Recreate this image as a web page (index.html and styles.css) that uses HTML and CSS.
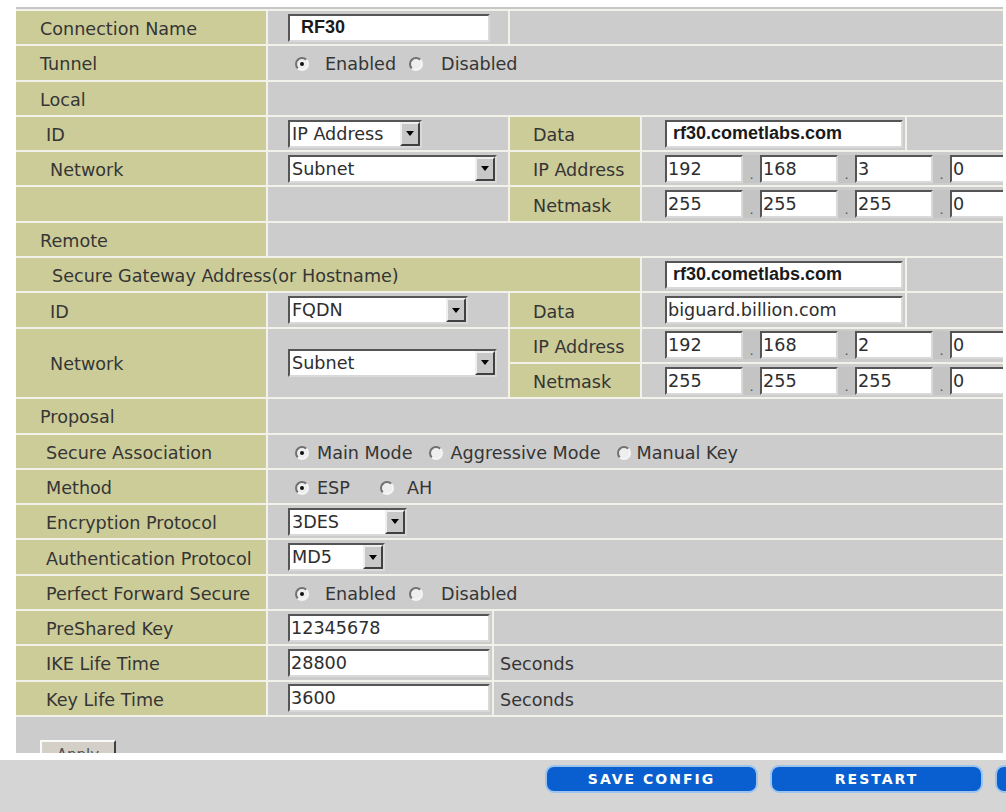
FILE: index.html
```html
<!DOCTYPE html>
<html>
<head>
<meta charset="utf-8">
<title>IPSec Connection</title>
<link rel="stylesheet" href="styles.css">
</head>
<body>
<div class="page">
  <div class="panel">
    <div class="form">
      <!-- 1 -->
      <div class="lbl">Connection Name</div>
      <div class="cell"><input class="txt bold w202 pb1" value="RF30"></div>
      <div class="cell s3"></div>
      <!-- 2 -->
      <div class="lbl">Tunnel</div>
      <div class="cell s4 radios">
        <span class="opt"><span class="rb on wide"></span><span class="ol wide">Enabled</span></span>
        <span class="opt"><span class="rb wide2"></span><span>Disabled</span></span>
      </div>
      <!-- 3 -->
      <div class="lbl">Local</div>
      <div class="cell s4"></div>
      <!-- 4 -->
      <div class="lbl sub">ID</div>
      <div class="cell"><div class="sel w134"><span class="v">IP Address</span><span class="arr"></span></div></div>
      <div class="olive">Data</div>
      <div class="cell d"><input class="txt bold w238 pb2" value="rf30.cometlabs.com"></div>
      <div class="cell"></div>
      <!-- 5 -->
      <div class="lbl sub2">Network</div>
      <div class="cell"><div class="sel w209"><span class="v">Subnet</span><span class="arr"></span></div></div>
      <div class="olive">IP Address</div>
      <div class="cell d s2 clip">
        <div class="ip"><input class="txt ipf" value="192"><span class="dot">.</span><input class="txt ipf" value="168"><span class="dot">.</span><input class="txt ipf" value="3"><span class="dot">.</span><input class="txt ipf" value="0"></div>
      </div>
      <!-- 6 -->
      <div class="lbl"></div>
      <div class="cell"></div>
      <div class="olive">Netmask</div>
      <div class="cell d s2 clip">
        <div class="ip"><input class="txt ipf" value="255"><span class="dot">.</span><input class="txt ipf" value="255"><span class="dot">.</span><input class="txt ipf" value="255"><span class="dot">.</span><input class="txt ipf" value="0"></div>
      </div>
      <!-- 7 -->
      <div class="lbl">Remote</div>
      <div class="cell s4"></div>
      <!-- 8 -->
      <div class="lbl sub3 s3">Secure Gateway Address(or Hostname)</div>
      <div class="cell d"><input class="txt bold w238 pb2" value="rf30.cometlabs.com"></div>
      <div class="cell"></div>
      <!-- 9 -->
      <div class="lbl sub2">ID</div>
      <div class="cell"><div class="sel w180"><span class="v">FQDN</span><span class="arr"></span></div></div>
      <div class="olive">Data</div>
      <div class="cell d"><input class="txt w238" value="biguard.billion.com"></div>
      <div class="cell"></div>
      <!-- 10 / 11 -->
      <div class="lbl sub2 r2">Network</div>
      <div class="cell r2"><div class="sel w209"><span class="v">Subnet</span><span class="arr"></span></div></div>
      <div class="olive">IP Address</div>
      <div class="cell d s2 clip">
        <div class="ip"><input class="txt ipf" value="192"><span class="dot">.</span><input class="txt ipf" value="168"><span class="dot">.</span><input class="txt ipf" value="2"><span class="dot">.</span><input class="txt ipf" value="0"></div>
      </div>
      <div class="olive">Netmask</div>
      <div class="cell d s2 clip">
        <div class="ip"><input class="txt ipf" value="255"><span class="dot">.</span><input class="txt ipf" value="255"><span class="dot">.</span><input class="txt ipf" value="255"><span class="dot">.</span><input class="txt ipf" value="0"></div>
      </div>
      <!-- 12 -->
      <div class="lbl">Proposal</div>
      <div class="cell s4"></div>
      <!-- 13 -->
      <div class="lbl sub">Secure Association</div>
      <div class="cell s4 radios">
        <span class="opt"><span class="rb on"></span><span class="ol">Main Mode</span></span>
        <span class="opt"><span class="rb"></span><span class="ol">Aggressive Mode</span></span>
        <span class="opt"><span class="rb tight"></span><span>Manual Key</span></span>
      </div>
      <!-- 14 -->
      <div class="lbl sub">Method</div>
      <div class="cell s4 radios">
        <span class="opt"><span class="rb on"></span><span class="ol far">ESP</span></span>
        <span class="opt"><span class="rb mid"></span><span>AH</span></span>
      </div>
      <!-- 15 -->
      <div class="lbl sub">Encryption Protocol</div>
      <div class="cell s4"><div class="sel w119"><span class="v">3DES</span><span class="arr"></span></div></div>
      <!-- 16 -->
      <div class="lbl sub">Authentication Protocol</div>
      <div class="cell s4"><div class="sel w97"><span class="v">MD5</span><span class="arr"></span></div></div>
      <!-- 17 -->
      <div class="lbl sub">Perfect Forward Secure</div>
      <div class="cell s4 radios">
        <span class="opt"><span class="rb on wide"></span><span class="ol wide">Enabled</span></span>
        <span class="opt"><span class="rb wide2"></span><span>Disabled</span></span>
      </div>
      <!-- 18 -->
      <div class="lbl sub">PreShared Key</div>
      <div class="split s4">
        <div class="cell first"><input class="txt w202" value="12345678"></div>
        <div class="cell rest"></div>
      </div>
      <!-- 19 -->
      <div class="lbl sub">IKE Life Time</div>
      <div class="split s4">
        <div class="cell first"><input class="txt w202" value="28800"></div>
        <div class="cell rest">Seconds</div>
      </div>
      <!-- 20 -->
      <div class="lbl sub">Key Life Time</div>
      <div class="split s4">
        <div class="cell first"><input class="txt w202" value="3600"></div>
        <div class="cell rest">Seconds</div>
      </div>
    </div>
    <div class="applyrow"><button class="apply" type="button">Apply</button></div>
  </div>
  <div class="bar">
    <button class="btn" type="button">SAVE CONFIG</button>
    <button class="btn" type="button">RESTART</button>
    <button class="btn" type="button" aria-label="Logout"></button>
  </div>
</div>
</body>
</html>
```

FILE: styles.css
```css
* { box-sizing: border-box; }
html, body { margin: 0; padding: 0; background: #fff; }
body {
  width: 1006px;
  height: 812px;
  overflow: hidden;
  font-family: "DejaVu Sans", Verdana, sans-serif;
  font-size: 17.6px;
  color: #353535;
}
.page { display: flex; flex-direction: column; }

.panel {
  margin: 7px 0 0 16px;
  width: 987px;
  border-top: 2px solid #c6c6c6;
  padding-top: 2px;
  background: #f2f2ea;
}
.form {
  display: grid;
  grid-template-columns: 250px 240px 130px 263px 96px;
  grid-auto-rows: 33.3px;
  gap: 2px;
}
.lbl {
  background: #cccc99;
  display: flex;
  align-items: center;
  padding: 3px 0 0 24px;
  white-space: nowrap;
}
.lbl.sub { padding-left: 30px; }
.lbl.sub2 { padding-left: 34px; }
.lbl.sub3 { padding-left: 36px; }
.olive {
  background: #cccc99;
  display: flex;
  align-items: center;
  padding: 3px 0 0 23px;
  white-space: nowrap;
}
.cell {
  background: #cccccc;
  display: flex;
  align-items: center;
  padding-left: 20px;
  white-space: nowrap;
}
.cell.d { padding-left: 23px; }
.clip { overflow: hidden; }
.s2 { grid-column: span 2; }
.s3 { grid-column: span 3; }
.s4 { grid-column: span 4; }
.r2 { grid-row: span 2; }

.split { display: flex; gap: 2px; }
.split .first { width: 224px; flex: none; }
.split .rest { flex: 1; padding: 3px 0 0 6px; }

/* text inputs */
.txt {
  height: 28px;
  border: 2px solid;
  border-color: #555 #d9d9d9 #d9d9d9 #555;
  background: #fff;
  font-family: "DejaVu Sans", Verdana, sans-serif;
  font-size: 17.6px;
  color: #2e2e2e;
  padding: 0 1px;
  margin: 0;
  outline: none;
}
.txt.bold {
  font-family: "Liberation Sans", Arial, sans-serif;
  font-weight: bold;
  font-size: 18px;
  color: #1a1a1a;
}
.pb1 { padding-left: 11px; }
.pb2 { padding-left: 6px; }
.w202 { width: 202px; }
.w238 { width: 238px; }

.ip { display: flex; align-items: stretch; flex: none; }
.ipf { width: 78px; flex: none; }
.dot {
  width: 17px;
  flex: none;
  display: flex;
  align-items: flex-end;
  justify-content: center;
  font-size: 13px;
  line-height: 1;
  padding-bottom: 2px;
  color: #555;
  background: #c4c4c4;
}

/* fake select */
.sel {
  display: flex;
  height: 28px;
  border: 2px solid;
  border-color: #555 #d9d9d9 #d9d9d9 #555;
  background: #fff;
  flex: none;
}
.sel .v {
  flex: 1;
  display: flex;
  align-items: center;
  padding-left: 2px;
  color: #2e2e2e;
}
.sel .arr {
  width: 20px;
  background: #c8c8c8;
  border: 2px solid;
  border-color: #efefef #404040 #404040 #efefef;
  display: flex;
  align-items: center;
  justify-content: center;
}
.sel .arr::after {
  content: "";
  width: 0;
  height: 0;
  border-left: 4px solid transparent;
  border-right: 4px solid transparent;
  border-top: 5px solid #000;
}
.w134 { width: 134px; }
.w209 { width: 209px; }
.w180 { width: 180px; }
.w119 { width: 119px; }
.w97 { width: 97px; }

/* radios */
.radios { padding: 3px 0 0 27px; }
.opt { display: inline-flex; align-items: center; }
.rb {
  width: 14px;
  height: 14px;
  border-radius: 50%;
  border: 2px solid;
  border-color: #707070 #f4f4f4 #f4f4f4 #707070;
  background: #eeeeee;
  margin-right: 8px;
  display: inline-flex;
  align-items: center;
  justify-content: center;
  flex: none;
}
.rb.on::after {
  content: "";
  width: 4px;
  height: 4px;
  border-radius: 50%;
  background: #111;
}
.rb.wide { margin-right: 16px; }
.rb.wide2 { margin-right: 18px; }
.rb.mid { margin-right: 13px; }
.rb.tight { margin-right: 6px; }
.ol { margin-right: 16px; }
.ol.wide { margin-right: 13px; }
.ol.far { margin-right: 30px; }

/* apply row */
.applyrow {
  margin-top: 2px;
  height: 36px;
  background: #cccccc;
  overflow: hidden;
  padding: 23px 0 0 24px;
}
.apply {
  width: 76px;
  height: 30px;
  border: 2px solid;
  border-color: #fafafa #404040 #404040 #fafafa;
  background: #d4d0c8;
  font-family: "DejaVu Sans", Verdana, sans-serif;
  font-size: 15px;
  color: #555;
  padding: 0;
}

/* bottom bar */
.bar {
  margin-top: 7px;
  height: 52px;
  background: #d5d5d5;
  display: flex;
  gap: 12px;
  padding: 5px 0 0 545px;
  overflow: hidden;
}
.btn {
  flex: none;
  width: 213px;
  height: 28px;
  border-radius: 9px;
  border: 2px solid #9ac4ee;
  background: #0a5fd0;
  color: #fff;
  font-family: "DejaVu Sans", Verdana, sans-serif;
  font-weight: bold;
  font-size: 14px;
  letter-spacing: 2px;
  padding: 0;
  display: flex;
  align-items: center;
  justify-content: center;
}
```
